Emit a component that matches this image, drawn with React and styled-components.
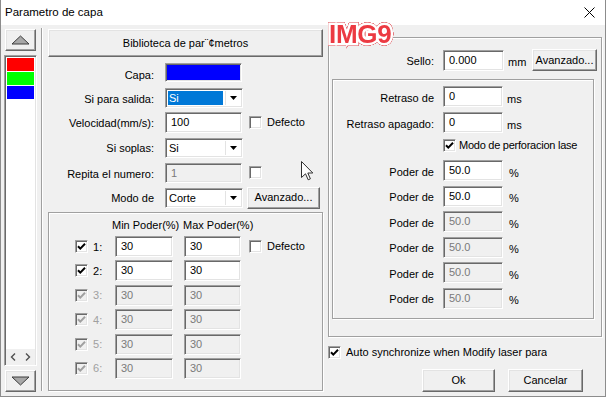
import React from 'react';
import styled, { createGlobalStyle, css } from 'styled-components';

const Global = createGlobalStyle`
  html, body { margin: 0; padding: 0; background: #fff; }
  body { font-family: "Liberation Sans", Arial, sans-serif; font-size: 11px; color: #000; }
  * { box-sizing: border-box; }
`;

const sunken = css`
  border-style: solid;
  border-width: 1px;
  border-color: #a0a0a0 #fff #fff #a0a0a0;
  box-shadow: inset 1px 1px 0 #696969, inset -1px -1px 0 #e3e3e3;
`;

const raised = css`
  border-style: solid;
  border-width: 1px;
  border-color: #fff #696969 #696969 #fff;
  box-shadow: inset -1px -1px 0 #a0a0a0, inset 1px 1px 0 #e3e3e3;
  background: #f0f0f0;
`;

const Window = styled.div`
  position: relative;
  width: 606px;
  height: 397px;
  border: 1px solid #8c8c8c;
  border-top: none;
  background: #f0f0f0;
  display: flex;
  flex-direction: column;
  overflow: hidden;
`;

const TitleBar = styled.div`
  height: 25px;
  flex: none;
  background: #fff;
  display: flex;
  align-items: center;
  justify-content: space-between;
  padding: 0 10px 1px 4px;
  font-size: 11.5px;
`;

const Body = styled.div`
  flex: 1;
  display: flex;
  padding: 4px 3px 4px 3px;
  min-height: 0;
`;

const LeftStrip = styled.div`
  width: 33px;
  flex: none;
  display: flex;
  flex-direction: column;
  gap: 4px;
`;

const ArrowButton = styled.div`
  ${raised};
  height: 22px;
  margin: 0 1px;
  display: flex;
  align-items: center;
  justify-content: center;
`;

const ListBox = styled.div`
  ${sunken};
  flex: 1;
  background: #fff;
  display: flex;
  flex-direction: column;
  padding: 2px 2px 1px 2px;
`;

const LayerItem = styled.div`
  height: 13px;
  margin-bottom: 1px;
  background: ${p => p.$color};
`;

const ListSpacer = styled.div`
  flex: 1;
`;

const HScroll = styled.div`
  height: 16px;
  background: #f0f0f0;
  display: flex;
  align-items: center;
  gap: 9px;
  padding-left: 4px;
  margin: 0 -1px -1px -1px;
`;

const Separator = styled.div`
  width: 2px;
  flex: none;
  margin: -1px 0 1px 4px;
  border-left: 1px solid #a0a0a0;
  border-right: 1px solid #fff;
`;

const Middle = styled.div`
  width: 275px;
  flex: none;
  margin-left: 5px;
  display: flex;
  flex-direction: column;
`;

const Button = styled.div`
  ${raised};
  width: ${p => p.$w}px;
  height: ${p => p.$h || 23}px;
  margin-left: ${p => p.$ml || 0}px;
  flex: none;
  display: flex;
  align-items: center;
  justify-content: center;
  white-space: nowrap;
  padding-bottom: 1px;
`;

const Form = styled.div`
  margin-top: 3px;
  display: flex;
  flex-direction: column;
`;

const FormRow = styled.div`
  height: 25px;
  display: flex;
  align-items: center;
`;

const Label = styled.div`
  width: ${p => p.$w}px;
  margin-right: ${p => p.$mr}px;
  padding-top: ${p => p.$dy || 0}px;
  flex: none;
  text-align: right;
  white-space: nowrap;
`;

const Swatch = styled.div`
  ${sunken};
  width: 77px;
  height: 19px;
  background: #0000ff;
`;

const Field = styled.div`
  ${sunken};
  width: ${p => p.$w}px;
  height: ${p => p.$h || 21}px;
  margin-left: ${p => p.$ml || 0}px;
  flex: none;
  background: ${p => (p.$disabled ? '#f0f0f0' : '#fff')};
  color: ${p => (p.$disabled ? '#7a7a7a' : '#000')};
  padding: 2px 0 0 5px;
  line-height: 14px;
  white-space: nowrap;
`;

const ComboBox = styled.div`
  ${sunken};
  width: 78px;
  height: 20px;
  flex: none;
  background: #fff;
  display: flex;
  padding: 2px;
`;

const ComboText = styled.div`
  flex: 1;
  padding-left: 1px;
  line-height: 15px;
  background: ${p => (p.$selected ? '#0078d7' : 'transparent')};
  color: ${p => (p.$selected ? '#fff' : '#000')};
  margin-right: 2px;
`;

const ComboDrop = styled.div`
  width: 15px;
  flex: none;
  border-left: 1px solid #e3e3e3;
  display: flex;
  align-items: center;
  justify-content: center;
`;

const CheckBox = styled.span`
  ${sunken};
  width: 13px;
  height: 13px;
  flex: none;
  margin-left: ${p => p.$ml || 0}px;
  display: inline-flex;
  align-items: center;
  justify-content: center;
  background: ${p => (p.$disabled ? '#f0f0f0' : '#fff')};
`;

const CheckText = styled.span`
  margin-left: ${p => p.$ml || 5}px;
  white-space: nowrap;
  overflow: hidden;
  width: ${p => (p.$w ? `${p.$w}px` : 'auto')};
  letter-spacing: ${p => p.$ls || 0}px;
  line-height: 13px;
`;

const PowerGroup = styled.div`
  margin-top: 2px;
  height: 179px;
  border: 1px solid #a0a0a0;
  box-shadow: inset 1px 1px 0 #fff, 1px 1px 0 #fff;
  padding: 5px 0 0 26px;
  display: flex;
  flex-direction: column;
`;

const PowerHeader = styled.div`
  height: 14px;
  display: flex;
  align-items: center;
  padding-left: 37px;
  white-space: nowrap;
`;

const HeadCell = styled.span`
  width: ${p => (p.$w ? `${p.$w}px` : 'auto')};
`;

const PowerRows = styled.div`
  margin-top: 4px;
  display: flex;
  flex-direction: column;
  gap: 3.4px;
`;

const PowerRow = styled.div`
  height: 21px;
  display: flex;
  align-items: center;
`;

const RowNum = styled.span`
  width: 22px;
  margin-left: 5px;
  flex: none;
  color: ${p => (p.$disabled ? '#a0a0a0' : '#000')};
`;

const Right = styled.div`
  width: 274px;
  flex: none;
  margin-left: 5px;
  display: flex;
  flex-direction: column;
`;

const OuterGroup = styled.div`
  margin-top: 8px;
  height: 300px;
  flex: none;
  border: 1px solid #a0a0a0;
  box-shadow: inset 1px 1px 0 #fff, 1px 1px 0 #fff;
  padding-top: 11px;
  display: flex;
  flex-direction: column;
`;

const InnerGroup = styled.div`
  margin: 8px 0 0 3px;
  width: 262px;
  height: 240px;
  flex: none;
  border: 1px solid #a0a0a0;
  box-shadow: inset 1px 1px 0 #fff, 1px 1px 0 #fff;
  padding-top: 6px;
  display: flex;
  flex-direction: column;
`;

const SettingRow = styled.div`
  height: ${p => p.$h || 21}px;
  margin-top: ${p => p.$mt || 0}px;
  flex: none;
  display: flex;
  align-items: center;
  padding-left: ${p => p.$pl || 0}px;
`;

const Unit = styled.span`
  width: ${p => p.$w || 24}px;
  padding: 4px 0 0 ${p => p.$pl || 4}px;
  flex: none;
`;

const SyncRow = styled.div`
  margin-top: 9px;
  height: 13px;
  display: flex;
  align-items: center;
`;

const ButtonBar = styled.div`
  margin-top: 10px;
  display: flex;
  justify-content: flex-end;
  gap: 13px;
  padding-right: 19px;
`;

const Logo = styled.div`
  position: absolute;
  left: 328px;
  top: 21px;
  font-family: "Liberation Sans", Arial, sans-serif;
  font-weight: bold;
  font-size: 26px;
  line-height: 26px;
  color: #ec3a42;
  -webkit-text-stroke: 5px #fff;
  paint-order: stroke fill;
  letter-spacing: -0.3px;
  filter: drop-shadow(0 0 0.7px #d8343b) drop-shadow(0 0 0.7px #d8343b) drop-shadow(0 0 0.5px #d8343b);
`;

const Cursor = styled.svg`
  position: absolute;
  left: 300px;
  top: 161px;
`;

function Check({ checked, disabled, ml }) {
  return (
    <CheckBox $disabled={disabled} $ml={ml}>
      {checked && (
        <svg width="9" height="9" viewBox="0 0 9 9">
          <path d="M1 4.2 L3.3 6.6 L8 1.8" stroke={disabled ? '#a0a0a0' : '#000'} strokeWidth="2" fill="none" />
        </svg>
      )}
    </CheckBox>
  );
}

function Combo({ value, selected }) {
  return (
    <ComboBox>
      <ComboText $selected={selected}>{value}</ComboText>
      <ComboDrop>
        <svg width="7" height="4" viewBox="0 0 7 4"><polygon points="0,0 7,0 3.5,4" fill="#000" /></svg>
      </ComboDrop>
    </ComboBox>
  );
}

function Triangle({ down }) {
  return (
    <svg width="19" height="10" viewBox="0 0 19 10">
      <polygon
        points={down ? '1,1 18,1 9.5,9' : '1,9 18,9 9.5,1'}
        fill="#a8a8a8"
        stroke="#3c3c3c"
        strokeWidth="1"
      />
    </svg>
  );
}

const layers = ['#ff0000', '#00ff00', '#0000ff'];
const minMax = [1, 2, 3, 4, 5, 6];

export default function App() {
  return (
    <>
      <Global />
      <Window>
        <TitleBar>
          <span>Parametro de capa</span>
          <svg width="11" height="11" viewBox="0 0 11 11">
            <path d="M0.5 0.5 L10.5 10.5 M10.5 0.5 L0.5 10.5" stroke="#000" strokeWidth="1" />
          </svg>
        </TitleBar>
        <Body>
          <LeftStrip>
            <ArrowButton><Triangle /></ArrowButton>
            <ListBox>
              {layers.map(c => <LayerItem key={c} $color={c} />)}
              <ListSpacer />
              <HScroll>
                <svg width="6" height="8" viewBox="0 0 6 8"><path d="M5 0.5 L1.5 4 L5 7.5" stroke="#505050" strokeWidth="1.4" fill="none" /></svg>
                <svg width="6" height="8" viewBox="0 0 6 8"><path d="M1 0.5 L4.5 4 L1 7.5" stroke="#505050" strokeWidth="1.4" fill="none" /></svg>
              </HScroll>
            </ListBox>
            <ArrowButton><Triangle down /></ArrowButton>
          </LeftStrip>
          <Separator />
          <Middle>
            <Button $w={275} $h={28}>Biblioteca de par¨¢metros</Button>
            <Form>
              <FormRow>
                <Label $w={106} $mr={11} $dy={4}>Capa:</Label>
                <Swatch />
              </FormRow>
              <FormRow>
                <Label $w={106} $mr={11} $dy={2}>Si para salida:</Label>
                <Combo value="Si" selected />
              </FormRow>
              <FormRow>
                <Label $w={106} $mr={11}>Velocidad(mm/s):</Label>
                <Field $w={77}>100</Field>
                <Check ml={7} />
                <CheckText>Defecto</CheckText>
              </FormRow>
              <FormRow>
                <Label $w={106} $mr={11}>Si soplas:</Label>
                <Combo value="Si" />
              </FormRow>
              <FormRow>
                <Label $w={106} $mr={11} $dy={2}>Repita el numero:</Label>
                <Field $w={77} $h={20} $disabled>1</Field>
                <Check ml={7} />
              </FormRow>
              <FormRow>
                <Label $w={106} $mr={11}>Modo de</Label>
                <Combo value="Corte" />
                <Button $w={73} $h={22} $ml={4}>Avanzado...</Button>
              </FormRow>
            </Form>
            <PowerGroup>
              <PowerHeader>
                <HeadCell $w={71}>Min Poder(%)</HeadCell>
                <HeadCell>Max Poder(%)</HeadCell>
              </PowerHeader>
              <PowerRows>
                {minMax.map(n => {
                  const off = n > 2;
                  return (
                    <PowerRow key={n}>
                      <Check checked disabled={off} />
                      <RowNum $disabled={off}>{n}:</RowNum>
                      <Field $w={58} $disabled={off}>30</Field>
                      <Field $w={57} $ml={11} $disabled={off}>30</Field>
                      {n === 1 && (
                        <>
                          <Check ml={8} />
                          <CheckText>Defecto</CheckText>
                        </>
                      )}
                    </PowerRow>
                  );
                })}
              </PowerRows>
            </PowerGroup>
          </Middle>
          <Right>
            <OuterGroup>
              <SettingRow $h={22}>
                <Label $w={105} $mr={9} $dy={1}>Sello:</Label>
                <Field $w={61}>0.000</Field>
                <Unit>mm</Unit>
                <Button $w={65} $h={22} $ml={4}>Avanzado...</Button>
              </SettingRow>
              <InnerGroup>
                <SettingRow>
                  <Label $w={101} $mr={9} $dy={2}>Retraso de</Label>
                  <Field $w={60}>0</Field>
                  <Unit>ms</Unit>
                </SettingRow>
                <SettingRow $mt={5}>
                  <Label $w={101} $mr={9} $dy={2}>Retraso apagado:</Label>
                  <Field $w={60}>0</Field>
                  <Unit>ms</Unit>
                </SettingRow>
                <SettingRow $mt={6} $h={13} $pl={110}>
                  <Check checked />
                  <CheckText $ml={3} $w={122} $ls={-0.25}>Modo de perforacion lase</CheckText>
                </SettingRow>
                {[0, 1, 2, 3, 4, 5].map(i => (
                  <SettingRow key={i} $mt={i === 0 ? 8 : 4.6}>
                    <Label $w={101} $mr={9} $dy={2}>Poder de</Label>
                    <Field $w={60} $disabled={i > 1}>50.0</Field>
                    <Unit $pl={6}>%</Unit>
                  </SettingRow>
                ))}
              </InnerGroup>
            </OuterGroup>
            <SyncRow>
              <Check checked />
              <CheckText $ml={5}>Auto synchronize when Modify laser para</CheckText>
            </SyncRow>
            <ButtonBar>
              <Button $w={73}>Ok</Button>
              <Button $w={75}>Cancelar</Button>
            </ButtonBar>
          </Right>
        </Body>
        <Logo>IMG9</Logo>
        <Cursor width="13" height="20" viewBox="0 0 13 20">
          <path d="M0.5 0.5 L0.5 16.5 L4.5 12.8 L7.2 18.8 L9.4 17.8 L6.8 12 L11.8 12 Z" fill="#fff" stroke="#303030" strokeWidth="1" />
        </Cursor>
      </Window>
    </>
  );
}
